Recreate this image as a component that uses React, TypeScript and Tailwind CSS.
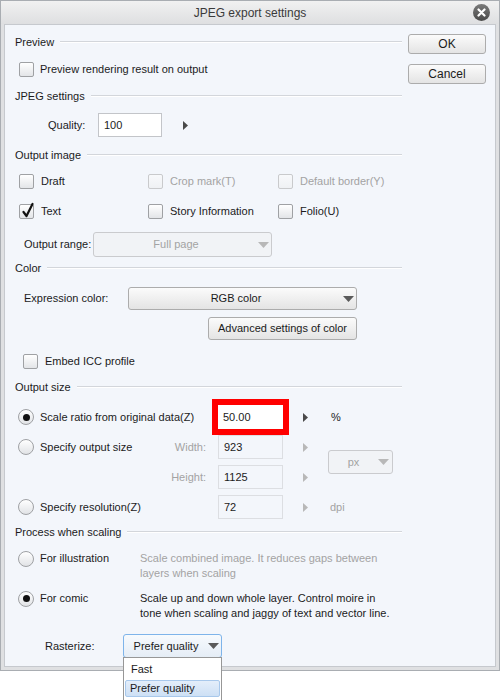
import React from 'react';

const Arrow = ({ disabled }: { disabled?: boolean }) => (
    <svg width="5" height="9" viewBox="0 0 5 9" className="shrink-0">
        <path d="M0 0 L5 4.5 L0 9 Z" fill={disabled ? '#b8b8b8' : '#4a4a4a'} />
    </svg>
);

const Caret = ({ disabled }: { disabled?: boolean }) => (
    <svg width="11" height="6" viewBox="0 0 11 6" className="shrink-0">
        <path d="M0 0 H11 L5.5 6 Z" fill={disabled ? '#b8b8b8' : '#5a5a5a'} />
    </svg>
);

const Checkbox = ({ checked, disabled }: { checked?: boolean; disabled?: boolean }) => (
    <span
        className={
            disabled
                ? 'relative block shrink-0 w-[15px] h-[15px] rounded-[2px] border border-[#c9cacc] bg-gradient-to-b from-[#f8f9fb] to-[#eff1f4]'
                : 'relative block shrink-0 w-[15px] h-[15px] rounded-[2px] border border-[#9fa1a4] bg-gradient-to-b from-white to-[#e3e5e8]'
        }
    >
        {checked && (
            <svg width="14" height="16" viewBox="0 0 14 16" className="absolute left-[1px] top-[-3px]">
                <path d="M2.5 10 L5.5 14 L11.5 2" fill="none" stroke="#111" strokeWidth="2.2" strokeLinecap="round" strokeLinejoin="round" />
            </svg>
        )}
    </span>
);

const Radio = ({ checked }: { checked?: boolean }) => (
    <span className="shrink-0 w-[16px] h-[16px] rounded-full border border-[#9fa1a4] bg-gradient-to-b from-white to-[#e1e3e6] flex items-center justify-center">
        {checked && <span className="w-[7px] h-[7px] rounded-full bg-[#111]" />}
    </span>
);

const Section = ({ title, className = '' }: { title: string; className?: string }) => (
    <div className={`flex items-center h-[16px] ${className}`}>
        <span>{title}</span>
        <div className="flex-1 ml-[6px] border-t border-[#d3d6db] border-b border-b-white" />
    </div>
);

const Button = ({ children, className = '' }: { children: React.ReactNode; className?: string }) => (
    <div
        className={`flex items-center justify-center rounded-[3px] border border-[#acacac] bg-gradient-to-b from-[#fbfbfb] to-[#e4e4e4] ${className}`}
    >
        {children}
    </div>
);

const Field = ({ value, disabled }: { value: string; disabled?: boolean }) => (
    <div
        className={
            disabled
                ? 'w-[65px] h-[24px] flex items-center pl-[5px] border border-[#dcdee2] bg-[#f3f6fb]'
                : 'w-[65px] h-[24px] flex items-center pl-[5px] border border-[#c3c5c9] bg-white'
        }
    >
        {value}
    </div>
);

export default function App() {
    return (
        <div className="w-[500px] h-[700px] bg-white relative overflow-hidden font-['Liberation_Sans',Arial,sans-serif] text-[11px] text-[#1b1b1b]">
            <div className="h-[671px] flex flex-col border border-[#a9adb2] bg-[#dfe0e2]">
                {/* title bar */}
                <div className="relative h-[23px] shrink-0 flex items-center justify-center bg-gradient-to-b from-[#f1f1f1] to-[#dedfe1] text-[12px] text-[#3a3a3a]">
                    JPEG export settings
                    <span className="absolute right-[9px] top-[3px] w-[17px] h-[17px] rounded-full bg-gradient-to-b from-[#7a7a7a] to-[#4a4a4a] flex items-center justify-center">
                        <svg width="9" height="9" viewBox="0 0 9 9">
                            <path d="M1.5 1.5 L7.5 7.5 M7.5 1.5 L1.5 7.5" stroke="#fff" strokeWidth="2.2" strokeLinecap="round" />
                        </svg>
                    </span>
                </div>

                <div className="flex-1 flex px-[3px] pb-[3px]">
                    <div className="flex-1 flex bg-[#f3f6fb] border border-[#c6c9ce]">
                        {/* main column */}
                        <div className="w-[397px] pl-[10px] pt-[9px] flex flex-col">
                            <Section title="Preview" />
                            <div className="mt-[10px] h-[18px] flex items-center">
                                <span className="ml-[4px]"><Checkbox /></span>
                                <span className="ml-[6px]">Preview rendering result on output</span>
                            </div>

                            <Section title="JPEG settings" className="mt-[10px]" />
                            <div className="mt-[9px] h-[24px] flex items-center">
                                <span className="ml-[33px] w-[50px]">Quality:</span>
                                <div className="w-[64px] h-[24px] flex items-center pl-[5px] border border-[#c3c5c9] bg-white">100</div>
                                <span className="ml-[21px] flex"><Arrow /></span>
                            </div>

                            <Section title="Output image" className="mt-[10px]" />
                            <div className="mt-[9px] h-[18px] flex items-center pl-[4px]">
                                <div className="w-[129px] flex items-center">
                                    <Checkbox />
                                    <span className="ml-[7px]">Draft</span>
                                </div>
                                <div className="w-[130px] flex items-center text-[#a3a3a3]">
                                    <Checkbox disabled />
                                    <span className="ml-[7px]">Crop mark(T)</span>
                                </div>
                                <div className="flex items-center text-[#a3a3a3]">
                                    <Checkbox disabled />
                                    <span className="ml-[7px]">Default border(Y)</span>
                                </div>
                            </div>
                            <div className="mt-[12px] h-[18px] flex items-center pl-[4px]">
                                <div className="w-[129px] flex items-center">
                                    <Checkbox checked />
                                    <span className="ml-[7px]">Text</span>
                                </div>
                                <div className="w-[130px] flex items-center">
                                    <Checkbox />
                                    <span className="ml-[7px]">Story Information</span>
                                </div>
                                <div className="flex items-center">
                                    <Checkbox />
                                    <span className="ml-[7px]">Folio(U)</span>
                                </div>
                            </div>
                            <div className="mt-[12px] h-[25px] flex items-center">
                                <span className="ml-[9px] w-[69px]">Output range:</span>
                                <div className="w-[179px] h-[25px] flex items-center rounded-[3px] border border-[#cacbce] bg-[#f1f3f6] text-[#a3a3a3] pr-[2px]">
                                    <span className="flex-1 text-center">Full page</span>
                                    <Caret disabled />
                                </div>
                            </div>

                            <Section title="Color" className="mt-[3px]" />
                            <div className="mt-[11px] h-[23px] flex items-center">
                                <span className="ml-[9px] w-[104px]">Expression color:</span>
                                <Button className="w-[229px] h-[23px] pr-[2px]">
                                    <span className="flex-1 text-center">RGB color</span>
                                    <Caret />
                                </Button>
                            </div>
                            <div className="mt-[7px] h-[23px] flex items-center">
                                <Button className="ml-[193px] w-[149px] h-[23px]">Advanced settings of color</Button>
                            </div>
                            <div className="mt-[12px] h-[18px] flex items-center">
                                <span className="ml-[8px]"><Checkbox /></span>
                                <span className="ml-[7px]">Embed ICC profile</span>
                            </div>

                            <Section title="Output size" className="mt-[9px]" />
                            <div className="mt-[4px] h-[36px] flex items-center">
                                <div className="w-[197px] flex items-center pl-[3px]">
                                    <Radio checked />
                                    <span className="ml-[6px]">Scale ratio from original data(Z)</span>
                                </div>
                                <div className="border-[6px] border-[#ff0000] bg-white w-[77px] h-[36px] flex items-center pl-[5px]">50.00</div>
                                <span className="ml-[14px] flex"><Arrow /></span>
                                <span className="ml-[23px]">%</span>
                            </div>
                            <div className="flex items-center">
                                <div className="flex flex-col gap-[6px]">
                                    <div className="h-[24px] flex items-center">
                                        <div className="w-[203px] flex items-center pl-[3px] pr-[12px]">
                                            <Radio />
                                            <span className="ml-[6px]">Specify output size</span>
                                            <span className="ml-auto text-[#a3a3a3]">Width:</span>
                                        </div>
                                        <Field value="923" disabled />
                                        <span className="ml-[20px] flex"><Arrow disabled /></span>
                                    </div>
                                    <div className="h-[24px] flex items-center">
                                        <div className="w-[203px] flex items-center pr-[12px]">
                                            <span className="ml-auto text-[#a3a3a3]">Height:</span>
                                        </div>
                                        <Field value="1125" disabled />
                                        <span className="ml-[20px] flex"><Arrow disabled /></span>
                                    </div>
                                </div>
                                <div className="ml-[20px] w-[65px] h-[24px] flex items-center rounded-[3px] border border-[#cacbce] bg-[#f1f3f6] text-[#a3a3a3] pr-[3px]">
                                    <span className="flex-1 text-center">px</span>
                                    <Caret disabled />
                                </div>
                            </div>
                            <div className="mt-[6px] h-[24px] flex items-center">
                                <div className="w-[203px] flex items-center pl-[3px]">
                                    <Radio />
                                    <span className="ml-[6px]">Specify resolution(Z)</span>
                                </div>
                                <Field value="72" disabled />
                                <span className="ml-[20px] flex"><Arrow disabled /></span>
                                <span className="ml-[22px] text-[#a3a3a3]">dpi</span>
                            </div>

                            <Section title="Process when scaling" className="mt-[5px]" />
                            <div className="mt-[11px] flex items-start leading-[15px]">
                                <div className="w-[125px] h-[15px] flex items-center pl-[3px]">
                                    <Radio />
                                    <span className="ml-[6px]">For illustration</span>
                                </div>
                                <div className="text-[#a3a3a3]">
                                    <div>Scale combined image. It reduces gaps between</div>
                                    <div>layers when scaling</div>
                                </div>
                            </div>
                            <div className="mt-[10px] flex items-start leading-[15px]">
                                <div className="w-[125px] h-[15px] flex items-center pl-[3px]">
                                    <Radio checked />
                                    <span className="ml-[6px]">For comic</span>
                                </div>
                                <div>
                                    <div>Scale up and down whole layer. Control moire in</div>
                                    <div>tone when scaling and jaggy of text and vector line.</div>
                                </div>
                            </div>
                            <div className="mt-[13px] h-[24px] flex items-center">
                                <span className="ml-[30px] w-[78px]">Rasterize:</span>
                                <div className="relative w-[99px] h-[24px]">
                                    <div className="w-full h-full flex items-center rounded-[3px] border border-[#7eb4ea] bg-gradient-to-b from-[#f7fafd] to-[#e5edf6] pr-[2px]">
                                        <span className="flex-1 text-center">Prefer quality</span>
                                        <Caret />
                                    </div>
                                    <div className="absolute left-0 top-[23px] w-[99px] h-[46px] bg-white border border-[#979797] px-[1px] pt-[2px] z-10">
                                        <div className="h-[18px] flex items-center pl-[6px]">Fast</div>
                                        <div className="mt-[2px] h-[17px] flex items-center pl-[4px] rounded-[2px] border border-[#a8c8eb] bg-gradient-to-b from-[#e4eefa] to-[#cde0f5]">
                                            Prefer quality
                                        </div>
                                    </div>
                                </div>
                            </div>
                        </div>

                        {/* buttons column */}
                        <div className="ml-[6px] pt-[9px] flex flex-col">
                            <Button className="w-[78px] h-[20px] text-[12px]">OK</Button>
                            <Button className="mt-[10px] w-[78px] h-[20px] text-[12px]">Cancel</Button>
                        </div>
                    </div>
                </div>
            </div>
        </div>
    );
}
